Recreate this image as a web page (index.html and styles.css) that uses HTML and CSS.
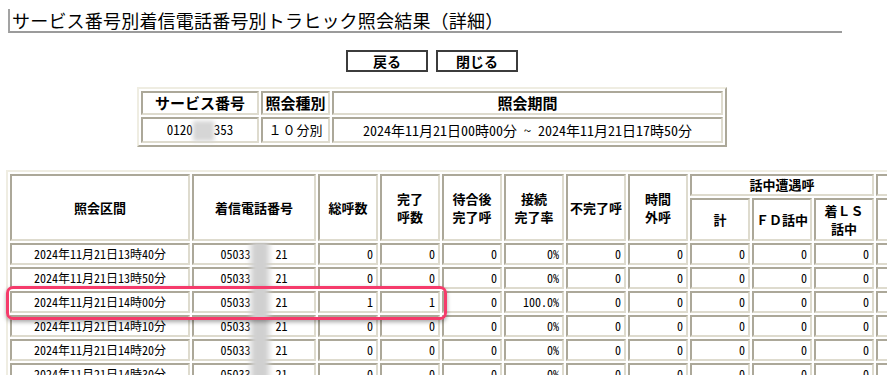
FILE: index.html
```html
<!DOCTYPE html>
<html lang="ja">
<head>
<meta charset="utf-8">
<title>サービス番号別着信電話番号別トラヒック照会結果（詳細）</title>
<link rel="stylesheet" href="styles.css">
</head>
<body>
<div class="page">
  <h1 class="title">サービス番号別着信電話番号別トラヒック照会結果（詳細）</h1>

  <div class="toolbar">
    <button class="btn" type="button">戻る</button>
    <button class="btn" type="button">閉じる</button>
  </div>

  <div class="summary-wrap">
    <table class="summary">
      <tr>
        <th class="s1">サービス番号</th>
        <th class="s2">照会種別</th>
        <th class="s3">照会期間</th>
      </tr>
      <tr>
        <td>0120<span class="mask"></span>353</td>
        <td><span class="fw">１０</span>分別</td>
        <td class="period">2024年11月21日00時00分 ～ 2024年11月21日17時50分</td>
      </tr>
    </table>
  </div>

  <div class="detail-wrap">
    <table class="detail">
      <thead>
        <tr class="ha">
          <th rowspan="2" class="w180">照会区間</th>
          <th rowspan="2" class="w124">着信電話番号</th>
          <th rowspan="2" class="w60">総呼数</th>
          <th rowspan="2" class="w60">完了<br>呼数</th>
          <th rowspan="2" class="w60">待合後<br>完了呼</th>
          <th rowspan="2" class="w60">接続<br>完了率</th>
          <th rowspan="2" class="w60">不完了呼</th>
          <th rowspan="2" class="w60">時間<br>外呼</th>
          <th colspan="3">話中遭遇呼</th>
          <th colspan="3"></th>
        </tr>
        <tr class="hb">
          <th class="w60">計</th>
          <th class="w60">ＦＤ話中</th>
          <th class="w60">着ＬＳ<br>話中</th>
          <th class="w60"></th>
          <th class="w60"></th>
          <th class="w60"></th>
        </tr>
      </thead>
      <tbody>
        <tr>
          <td class="c">2024年11月21日13時40分</td>
          <td class="c">05033<span class="gap"></span>21</td>
          <td>0</td><td>0</td><td>0</td><td>0%</td><td>0</td><td>0</td><td>0</td><td>0</td><td>0</td><td></td><td></td><td></td>
        </tr>
        <tr>
          <td class="c">2024年11月21日13時50分</td>
          <td class="c">05033<span class="gap"></span>21</td>
          <td>0</td><td>0</td><td>0</td><td>0%</td><td>0</td><td>0</td><td>0</td><td>0</td><td>0</td><td></td><td></td><td></td>
        </tr>
        <tr>
          <td class="c">2024年11月21日14時00分</td>
          <td class="c">05033<span class="gap"></span>21</td>
          <td>1</td><td>1</td><td>0</td><td>100.0%</td><td>0</td><td>0</td><td>0</td><td>0</td><td>0</td><td></td><td></td><td></td>
        </tr>
        <tr>
          <td class="c">2024年11月21日14時10分</td>
          <td class="c">05033<span class="gap"></span>21</td>
          <td>0</td><td>0</td><td>0</td><td>0%</td><td>0</td><td>0</td><td>0</td><td>0</td><td>0</td><td></td><td></td><td></td>
        </tr>
        <tr>
          <td class="c">2024年11月21日14時20分</td>
          <td class="c">05033<span class="gap"></span>21</td>
          <td>0</td><td>0</td><td>0</td><td>0%</td><td>0</td><td>0</td><td>0</td><td>0</td><td>0</td><td></td><td></td><td></td>
        </tr>
        <tr>
          <td class="c">2024年11月21日14時30分</td>
          <td class="c">05033<span class="gap"></span>21</td>
          <td>0</td><td>0</td><td>0</td><td>0%</td><td>0</td><td>0</td><td>0</td><td>0</td><td>0</td><td></td><td></td><td></td>
        </tr>
      </tbody>
    </table>
    <div class="blur-strip"></div>
    <div class="highlight"></div>
  </div>
</div>
</body>
</html>
```

FILE: styles.css
```css
html, body {
  margin: 0;
  padding: 0;
  overflow: hidden;
  background: #ffffff;
}

body {
  font-family: "Noto Sans CJK JP", "Noto Sans", sans-serif;
  color: #000000;
}

.page {
  padding-left: 6px;
}

.title {
  margin: 9px 0 0 2px;
  width: 830px;
  padding-left: 2px;
  font-size: 18px;
  font-weight: normal;
  line-height: 22px;
  letter-spacing: 0.2px;
  border-left: 2px solid #a3a3a3;
  border-bottom: 2px solid #9b9b9b;
  white-space: nowrap;
}

.toolbar {
  width: 852px;
  margin-top: 17px;
  display: flex;
  justify-content: center;
  gap: 8px;
}

.btn {
  width: 82px;
  height: 22px;
  box-sizing: border-box;
  padding: 0;
  border: 2px solid #3c3c3c;
  background: #ffffff;
  color: #000000;
  font-family: "Noto Sans CJK JP", sans-serif;
  font-weight: bold;
  font-size: 14px;
  line-height: 18px;
}

.summary-wrap {
  width: 852px;
  margin-top: 15px;
  display: flex;
  justify-content: center;
}

table.summary,
table.detail {
  border-collapse: separate;
  border-spacing: 2px;
  border: 2px solid;
  border-color: #efede2 #aca899 #aca899 #efede2;
}

.summary th,
.summary td,
.detail th,
.detail td {
  box-sizing: border-box;
  padding: 0;
  border: 2px solid;
  border-color: #aca899 #dedbce #dedbce #aca899;
  white-space: nowrap;
}

.summary th {
  font-size: 15px;
  font-weight: bold;
  line-height: 20px;
  text-align: center;
}

.summary td {
  font-size: 13px;
  line-height: 22px;
  text-align: center;
  font-feature-settings: "hwid";
}

.summary td.period {
  font-size: 14px;
}

.fw {
  font-feature-settings: normal;
  letter-spacing: 1px;
}

.summary .s1 { width: 118px; }
.summary .s2 { width: 69px; }
.summary .s3 { width: 391px; }

.mask {
  display: inline-block;
  width: 21px;
  height: 20px;
  vertical-align: middle;
  background: #d6d6d6;
  filter: blur(2px);
}

.detail-wrap {
  position: relative;
  width: 1200px;
  margin-top: 23px;
}

.detail th {
  font-size: 13px;
  font-weight: bold;
  line-height: 18px;
  text-align: center;
  vertical-align: middle;
}

.detail .ha th {
  height: 22px;
}

.detail .hb th {
  height: 43px;
}

.detail .w180 { width: 180px; }
.detail .w124 { width: 124px; }
.detail .w60 { width: 60px; }

.detail td {
  height: 22px;
  font-size: 12px;
  line-height: 18px;
  text-align: right;
  padding-right: 3px;
  font-feature-settings: "hwid";
}

.detail td.c {
  text-align: center;
  padding-right: 0;
}

.gap {
  display: inline-block;
  width: 25px;
}

.blur-strip {
  position: absolute;
  left: 241px;
  top: 73px;
  width: 26px;
  height: 150px;
  background: linear-gradient(to right, rgba(205,205,205,0), #d0d0d0 30%, #d0d0d0 70%, rgba(205,205,205,0));
  filter: blur(1.5px);
}

.highlight {
  position: absolute;
  left: 0;
  top: 116px;
  width: 441px;
  height: 34px;
  box-sizing: border-box;
  border: 3px solid #f53b6b;
  border-radius: 7px;
  box-shadow: 0 2px 4px rgba(0, 0, 0, 0.35);
}
```
